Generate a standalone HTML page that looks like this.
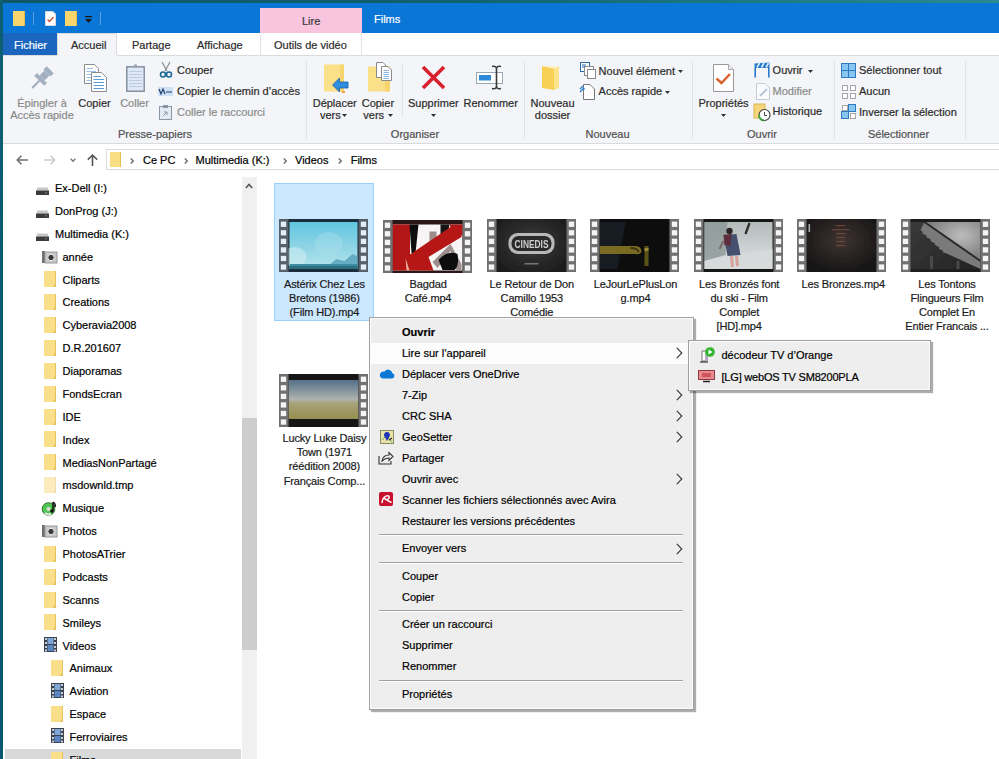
<!DOCTYPE html>
<html><head><meta charset="utf-8">
<style>
*{margin:0;padding:0;box-sizing:border-box}
html,body{width:999px;height:759px;overflow:hidden;background:#fff}
body{position:relative;font-family:"Liberation Sans",sans-serif;font-size:11px;color:#000}
.a{position:absolute}
svg.a{overflow:visible}
.t{position:absolute;white-space:nowrap;line-height:14px;font-size:11px;-webkit-text-stroke:0.2px currentColor}
.c{text-align:center}
.rt{color:#2b2b2b}
.dis{color:#8a8a8a}
.gl{color:#505050}
</style></head><body>

<div class="a" style="left:0px;top:0px;width:999px;height:3px;background:linear-gradient(90deg,#0e5866 0%,#10626c 45%,#1b7a83 75%,#2a8b8e 100%)"></div>
<div class="a" style="left:3px;top:3px;width:996px;height:30px;background:#0a76d6"></div>
<div class="a" style="left:0px;top:0px;width:3px;height:759px;background:linear-gradient(180deg,#0d5f74,#0b5a6e 50%,#0a5570)"></div>
<div class="a" style="left:13px;top:11px;width:12px;height:15px;background:#f9d56e;border-right:1px solid #e7b94a"></div>
<div class="a" style="left:33px;top:12px;width:1px;height:13px;background:#5a9ee0"></div>
<svg class="a" style="left:45px;top:11px" width="11" height="15" viewBox="0 0 11 15"><path d="M0.5 0.5H8L10.5 3V14.5H0.5Z" fill="#fff" stroke="#d8d8d8"/><path d="M2.5 8.5L4.5 10.5L8.5 6" fill="none" stroke="#c4512b" stroke-width="1.3"/></svg>
<div class="a" style="left:65px;top:11px;width:12px;height:15px;background:#f9d56e;border-right:1px solid #e7b94a"></div>
<svg class="a" style="left:85px;top:16px" width="8" height="8" viewBox="0 0 8 8"><rect x="0" y="0" width="7" height="1.3" fill="#1a1a1a"/><path d="M0 3H7L3.5 7Z" fill="#1a1a1a"/></svg>
<div class="a" style="left:100px;top:12px;width:1px;height:13px;background:#5a9ee0"></div>
<div class="a" style="left:260px;top:8px;width:102px;height:25px;background:#f8c4de"></div>
<div class="t " style="left:302px;top:13.5px;color:#3a3a3a">Lire</div>
<div class="t " style="left:374px;top:11.7px;color:#fff">Films</div>
<div class="a" style="left:3px;top:33px;width:996px;height:22px;background:#fff"></div>
<div class="a" style="left:3px;top:33px;width:54px;height:22px;background:#1a66bf"></div>
<div class="t " style="left:14px;top:37.8px;color:#fff">Fichier</div>
<div class="a" style="left:57px;top:33px;width:60px;height:23px;background:#f3f5f8;border:1px solid #dadbdc;border-bottom:none"></div>
<div class="t rt" style="left:71px;top:37.8px;">Accueil</div>
<div class="t rt" style="left:132px;top:37.8px;">Partage</div>
<div class="t rt" style="left:197px;top:37.8px;">Affichage</div>
<div class="a" style="left:260px;top:33px;width:1px;height:22px;background:#e3e3e3"></div>
<div class="a" style="left:361px;top:33px;width:1px;height:22px;background:#e3e3e3"></div>
<div class="t rt" style="left:274px;top:37.5px;">Outils de vidéo</div>
<div class="a" style="left:3px;top:55px;width:996px;height:89px;background:#f3f5f8;border-top:1px solid #dadbdc;border-bottom:1px solid #dadbdc"></div>
<div class="a" style="left:57px;top:55px;width:60px;height:1px;background:#f3f5f8"></div>
<div class="a" style="left:306px;top:61px;width:1px;height:78px;background:#e2e3e4"></div>
<div class="a" style="left:524px;top:61px;width:1px;height:78px;background:#e2e3e4"></div>
<div class="a" style="left:692px;top:61px;width:1px;height:78px;background:#e2e3e4"></div>
<div class="a" style="left:834px;top:61px;width:1px;height:78px;background:#e2e3e4"></div>
<div class="a" style="left:965px;top:61px;width:1px;height:78px;background:#e2e3e4"></div>
<div class="a" style="left:402px;top:64px;width:1px;height:53px;background:#e2e3e4"></div>
<svg class="a" style="left:29.5px;top:67.5px" width="22" height="22" viewBox="0 0 22 22"><g transform="rotate(45 11 11)" fill="#a3b0c2"><rect x="6" y="-2" width="10" height="4.5"/><rect x="7.5" y="2.5" width="7" height="7"/><rect x="4" y="9.5" width="14" height="4"/><rect x="10" y="13.5" width="2.2" height="10"/></g></svg>
<div class="t c dis" style="left:-18.0px;width:120px;top:95.8px;">Épingler à</div>
<div class="t c dis" style="left:-18.0px;width:120px;top:108.0px;">Accès rapide</div>
<svg class="a" style="left:84px;top:64px" width="24" height="28" viewBox="0 0 24 28"><path d="M0.5 0.5H10.5L14.5 4.5V19.5H0.5Z" fill="#fff" stroke="#8c8c8c"/><g stroke="#9cc3e6"><path d="M2.5 4.5H9M2.5 7.5H12M2.5 10.5H12M2.5 13.5H12M2.5 16.5H7"/></g><path d="M7.5 8.5H17.5L22.5 13.5V27.5H7.5Z" fill="#fff" stroke="#8c8c8c"/><g stroke="#5b9bd5"><path d="M9.5 12.5H17M9.5 15.5H20M9.5 18.5H20M9.5 21.5H20M9.5 24.5H20"/></g></svg>
<div class="t c rt" style="left:34.5px;width:120px;top:95.8px;">Copier</div>
<svg class="a" style="left:126px;top:64px" width="19" height="28" viewBox="0 0 19 28"><rect x="0.8" y="2.8" width="17.4" height="24.4" fill="#dfe9f6" stroke="#7d8a99" stroke-width="1.4"/><g stroke="#bccde3"><path d="M3 7.5H16M3 10.5H16M3 13.5H16M3 16.5H16M3 19.5H16M3 22.5H16"/></g><rect x="8" y="0.5" width="3" height="3" fill="#9aa5b2"/></svg>
<div class="t c dis" style="left:74.5px;width:120px;top:95.8px;">Coller</div>
<div class="t c gl" style="left:95.0px;width:120px;top:126.9px;">Presse-papiers</div>
<svg class="a" style="left:160px;top:62px" width="12" height="16" viewBox="0 0 12 16"><path d="M2 0L7 9M10 0L5 9" stroke="#8a8a8a" stroke-width="1.2"/><circle cx="3" cy="12.5" r="2.5" fill="none" stroke="#1f6b94" stroke-width="1.6"/><circle cx="9" cy="12.5" r="2.5" fill="none" stroke="#1f6b94" stroke-width="1.6"/></svg>
<div class="t rt" style="left:177px;top:63.1px;">Couper</div>
<svg class="a" style="left:158px;top:87px" width="15" height="9" viewBox="0 0 15 9"><rect x="0" y="0" width="15" height="9" fill="#cfe2f5"/><path d="M1 2L3 7L5 2L7 7M8 5H14" stroke="#1c3d6e" stroke-width="1.2" fill="none"/></svg>
<div class="t rt" style="left:177px;top:84.2px;">Copier le chemin d’accès</div>
<svg class="a" style="left:159px;top:105px" width="13" height="15" viewBox="0 0 13 15"><rect x="0.5" y="1.5" width="12" height="13" fill="#e4ebf4" stroke="#8b96a5"/><rect x="4" y="0" width="5" height="3" fill="#8b96a5"/><path d="M4 11L8 7M5 7H8V10" stroke="#8b96a5" fill="none"/></svg>
<div class="t dis" style="left:177px;top:105.1px;">Coller le raccourci</div>
<svg class="a" style="left:323px;top:64px" width="26" height="29" viewBox="0 0 26 29"><rect x="1" y="0.5" width="20" height="27" fill="#fbe08a"/><rect x="17" y="0.5" width="4" height="27" fill="#f6d46e"/><path d="M9.5 21L16.5 14V18H25V24H16.5V28Z" fill="#2f8ee0" stroke="#1d5f9e" stroke-width="0.8"/><rect x="19" y="27" width="3" height="2" fill="#f0a040"/></svg>
<div class="t rt" style="left:312.7px;top:95.9px;">Déplacer</div>
<div class="t rt" style="left:320px;top:108.2px;">vers</div>
<svg class="a" style="left:342px;top:113.5px" width="5" height="3" viewBox="0 0 5 3"><path d="M0 0H5L2.5 3Z" fill="#333"/></svg>
<svg class="a" style="left:367px;top:62px" width="27" height="30" viewBox="0 0 27 30"><rect x="1" y="4.5" width="22" height="25" fill="#fbe08a"/><rect x="18" y="4.5" width="5" height="25" fill="#f6d46e"/><path d="M9.5 0.5H16L18.5 3V15.5H9.5Z" fill="#fff" stroke="#8a8a8a"/><path d="M14.5 4.5H21L24.5 8V18.5H14.5Z" fill="#fff" stroke="#8a8a8a"/><path d="M16.5 8.5H22M16.5 10.5H22M16.5 12.5H22M16.5 14.5H22M16.5 16.5H22" stroke="#8ab8e2"/></svg>
<div class="t rt" style="left:361.7px;top:95.9px;">Copier</div>
<div class="t rt" style="left:363.3px;top:108.2px;">vers</div>
<svg class="a" style="left:388px;top:113.5px" width="5" height="3" viewBox="0 0 5 3"><path d="M0 0H5L2.5 3Z" fill="#333"/></svg>
<svg class="a" style="left:421px;top:65px" width="25" height="25" viewBox="0 0 25 25"><path d="M2 2L23 23M23 2L2 23" stroke="#d8202d" stroke-width="3.6"/></svg>
<div class="t rt" style="left:408px;top:95.9px;">Supprimer</div>
<svg class="a" style="left:431px;top:114px" width="5" height="3" viewBox="0 0 5 3"><path d="M0 0H5L2.5 3Z" fill="#333"/></svg>
<svg class="a" style="left:475px;top:64px" width="29" height="28" viewBox="0 0 29 28"><rect x="1.5" y="8.5" width="26" height="11" fill="#fff" stroke="#9aa7b5"/><rect x="4" y="11" width="12" height="5.5" fill="#2d89d9"/><path d="M17 2.5Q21.5 1.5 21.5 5V22Q21.5 25.5 17 24.5M26 2.5Q21.5 1.5 21.5 5V22Q21.5 25.5 26 24.5" stroke="#3a3a3a" stroke-width="1.6" fill="none"/></svg>
<div class="t rt" style="left:463.5px;top:95.9px;">Renommer</div>
<div class="t c gl" style="left:355.0px;width:120px;top:127.2px;">Organiser</div>
<svg class="a" style="left:541px;top:65px" width="19" height="26" viewBox="0 0 19 26"><path d="M1 1L13 3.5V25L1 23Z" fill="#f7d153"/><path d="M13 3.5L18 1.5V23L13 25Z" fill="#fbe38a"/><path d="M1 1L18 1.5L13 3.5Z" fill="#fdf0bf"/></svg>
<div class="t c rt" style="left:492.5px;width:120px;top:96.2px;">Nouveau</div>
<div class="t c rt" style="left:492.5px;width:120px;top:107.8px;">dossier</div>
<svg class="a" style="left:580px;top:62px" width="16" height="17" viewBox="0 0 16 17"><rect x="0.5" y="0.5" width="9" height="9" fill="#fff" stroke="#2d6aa8"/><rect x="4.5" y="4.5" width="9" height="9" fill="#fff" stroke="#8a8a8a"/><rect x="7.5" y="7.5" width="8" height="9" fill="#fff" stroke="#8a8a8a"/><path d="M2 3H6M2 5H5" stroke="#2d6aa8"/></svg>
<div class="t rt" style="left:598.6px;top:63.6px;">Nouvel élément</div>
<svg class="a" style="left:678px;top:70px" width="6" height="4" viewBox="0 0 6 4"><path d="M0 0H5L2.5 3Z" fill="#333"/></svg>
<svg class="a" style="left:580px;top:84px" width="15" height="16" viewBox="0 0 15 16"><path d="M3.5 0.5H10L14.5 5V15.5H3.5Z" fill="#fff" stroke="#777"/><path d="M0 5L3 2M0 8L4 4M2 5H5" stroke="#2d7bd0" stroke-width="1.2"/></svg>
<div class="t rt" style="left:598.6px;top:84.4px;">Accès rapide</div>
<svg class="a" style="left:665px;top:91px" width="6" height="4" viewBox="0 0 6 4"><path d="M0 0H5L2.5 3Z" fill="#333"/></svg>
<div class="t c gl" style="left:547.5px;width:120px;top:126.6px;">Nouveau</div>
<svg class="a" style="left:713px;top:64px" width="21" height="28" viewBox="0 0 21 28"><path d="M0.5 0.5H15.5L20.5 5.5V27.5H0.5Z" fill="#fff" stroke="#999"/><path d="M15.5 0.5V5.5H20.5" fill="#eee" stroke="#aaa"/><path d="M3.5 14.5L8.5 19L17 10" stroke="#d9602f" stroke-width="2.4" fill="none"/></svg>
<div class="t c rt" style="left:663.5px;width:120px;top:96.0px;">Propriétés</div>
<svg class="a" style="left:721px;top:113.5px" width="6" height="4" viewBox="0 0 6 4"><path d="M0 0H5L2.5 3Z" fill="#333"/></svg>
<svg class="a" style="left:754px;top:62px" width="16" height="16" viewBox="0 0 16 16"><path d="M0.5 1.5L15.5 0.5V6H0.5Z" fill="#2a78c8"/><path d="M3 5.5L5.5 1M7.5 5.5L10 1M12 5.5L14.5 1" stroke="#d8ecfb" stroke-width="1.6"/><path d="M1.2 6V15.5M14.8 6V15.5" stroke="#2a78c8" stroke-width="1.6"/></svg>
<div class="t rt" style="left:772.6px;top:62.8px;">Ouvrir</div>
<svg class="a" style="left:808px;top:70px" width="6" height="4" viewBox="0 0 6 4"><path d="M0 0H5L2.5 3Z" fill="#333"/></svg>
<svg class="a" style="left:756px;top:83px" width="14" height="17" viewBox="0 0 14 17"><path d="M0.5 0.5H9L13.5 5V16.5H0.5Z" fill="#fafbfc" stroke="#c4ccd6"/><path d="M4 13L11 6" stroke="#b9c7d8" stroke-width="2"/></svg>
<div class="t dis" style="left:772.6px;top:84.2px;">Modifier</div>
<svg class="a" style="left:753px;top:103px" width="18" height="18" viewBox="0 0 18 18"><rect x="1" y="1" width="11" height="14" fill="#f5d67a" stroke="#d9b34e"/><circle cx="11.5" cy="12" r="5.5" fill="#fff" stroke="#444" stroke-width="1.2"/><path d="M11.5 9V12.5H14" stroke="#444" fill="none"/><path d="M6 12A5.5 5.5 0 0 0 11 17.5" stroke="#3aa43a" stroke-width="2" fill="none"/></svg>
<div class="t rt" style="left:772.6px;top:104.4px;">Historique</div>
<div class="t c gl" style="left:702.0px;width:120px;top:126.8px;">Ouvrir</div>
<svg class="a" style="left:841px;top:63px" width="15" height="15" viewBox="0 0 15 15"><g fill="#86c6f0" stroke="#2f78c2"><rect x="0.5" y="0.5" width="7" height="7"/><rect x="7.5" y="0.5" width="7" height="7"/><rect x="0.5" y="7.5" width="7" height="7"/><rect x="7.5" y="7.5" width="7" height="7"/></g></svg>
<div class="t rt" style="left:859px;top:63.1px;">Sélectionner tout</div>
<svg class="a" style="left:841px;top:84px" width="16" height="16" viewBox="0 0 16 16"><g fill="#fff" stroke="#a5a5a5"><rect x="1.5" y="1.5" width="5" height="5"/><rect x="9.5" y="1.5" width="5" height="5"/><rect x="1.5" y="9.5" width="5" height="5"/><rect x="9.5" y="9.5" width="5" height="5"/></g></svg>
<div class="t rt" style="left:859px;top:84.2px;">Aucun</div>
<svg class="a" style="left:841px;top:104px" width="16" height="16" viewBox="0 0 16 16"><g stroke-width="1"><rect x="1.5" y="1.5" width="5" height="5" fill="#fff" stroke="#a5a5a5"/><rect x="7.5" y="0.5" width="7" height="7" fill="#86c6f0" stroke="#2f78c2"/><rect x="0.5" y="7.5" width="7" height="7" fill="#86c6f0" stroke="#2f78c2"/><rect x="9.5" y="9.5" width="5" height="5" fill="#fff" stroke="#a5a5a5"/></g></svg>
<div class="t rt" style="left:859px;top:105.1px;">Inverser la sélection</div>
<div class="t c gl" style="left:838.5px;width:120px;top:126.8px;">Sélectionner</div>
<svg class="a" style="left:16px;top:155px" width="12" height="10" viewBox="0 0 12 10"><path d="M1 5H12M5.5 0.8L1.2 5L5.5 9.2" stroke="#707070" stroke-width="1.5" fill="none"/></svg>
<svg class="a" style="left:44px;top:155px" width="12" height="10" viewBox="0 0 12 10"><path d="M0 5H11M6.5 0.8L10.8 5L6.5 9.2" stroke="#cdcdcd" stroke-width="1.5" fill="none"/></svg>
<svg class="a" style="left:70px;top:157.5px" width="6" height="4" viewBox="0 0 6 4"><path d="M0.6 0.6L3 3.2L5.4 0.6" stroke="#707070" stroke-width="1.3" fill="none"/></svg>
<svg class="a" style="left:87px;top:154px" width="11" height="12" viewBox="0 0 11 12"><path d="M5.5 1.2V12M0.8 5.6L5.5 1L10.2 5.6" stroke="#555" stroke-width="1.6" fill="none"/></svg>
<div class="a" style="left:106px;top:149px;width:893px;height:21px;border:1px solid #dcdcdc;border-right:none;background:#fff"></div>
<div class="a" style="left:110px;top:152px;width:11px;height:15px;background:#f9dd82;border-right:1px solid #e3bf55"></div>
<svg class="a" style="left:130px;top:157.5px" width="5" height="6" viewBox="0 0 5 6"><path d="M0.8 0.5L3.3 3L0.8 5.5" stroke="#6d6d6d" stroke-width="1.4" fill="none"/></svg>
<svg class="a" style="left:183.5px;top:157.5px" width="5" height="6" viewBox="0 0 5 6"><path d="M0.8 0.5L3.3 3L0.8 5.5" stroke="#6d6d6d" stroke-width="1.4" fill="none"/></svg>
<svg class="a" style="left:282.5px;top:157.5px" width="5" height="6" viewBox="0 0 5 6"><path d="M0.8 0.5L3.3 3L0.8 5.5" stroke="#6d6d6d" stroke-width="1.4" fill="none"/></svg>
<svg class="a" style="left:337.5px;top:157.5px" width="5" height="6" viewBox="0 0 5 6"><path d="M0.8 0.5L3.3 3L0.8 5.5" stroke="#6d6d6d" stroke-width="1.4" fill="none"/></svg>
<div class="t " style="left:143px;top:152.5px;">Ce PC</div>
<div class="t " style="left:195.5px;top:152.5px;">Multimedia (K:)</div>
<div class="t " style="left:295px;top:152.5px;">Videos</div>
<div class="t " style="left:350.7px;top:152.5px;">Films</div>
<div class="a" style="left:242px;top:177px;width:15px;height:582px;background:#f0f0f0"></div>
<svg class="a" style="left:245px;top:183px" width="8" height="6" viewBox="0 0 8 6"><path d="M0.8 5L4 1.5L7.2 5" stroke="#555" stroke-width="1.6" fill="none"/></svg>
<div class="a" style="left:242px;top:418px;width:15px;height:232px;background:#cdcdcd"></div>
<div class="a" style="left:5px;top:749px;width:236px;height:10px;background:#d9d9d9"></div>
<svg class="a" style="left:35.5px;top:187.4px" width="13" height="8" viewBox="0 0 13 8"><path d="M1.5 0.5H11.5L12.5 3.5H0.5Z" fill="#c6c6c6"/><rect x="0" y="3.5" width="13" height="4.5" fill="#3b3b3b"/><rect x="9" y="5" width="2" height="1.5" fill="#6a6a6a"/></svg>
<div class="t " style="left:55px;top:181.1px;">Ex-Dell (I:)</div>
<svg class="a" style="left:35.5px;top:210.27px" width="13" height="8" viewBox="0 0 13 8"><path d="M1.5 0.5H11.5L12.5 3.5H0.5Z" fill="#c6c6c6"/><rect x="0" y="3.5" width="13" height="4.5" fill="#3b3b3b"/><rect x="9" y="5" width="2" height="1.5" fill="#6a6a6a"/></svg>
<div class="t " style="left:55px;top:204.0px;">DonProg (J:)</div>
<svg class="a" style="left:35.5px;top:233.14000000000001px" width="13" height="8" viewBox="0 0 13 8"><path d="M1.5 0.5H11.5L12.5 3.5H0.5Z" fill="#c6c6c6"/><rect x="0" y="3.5" width="13" height="4.5" fill="#3b3b3b"/><rect x="9" y="5" width="2" height="1.5" fill="#6a6a6a"/></svg>
<div class="t " style="left:55px;top:226.8px;">Multimedia (K:)</div>
<svg class="a" style="left:42px;top:251.01px" width="15" height="12" viewBox="0 0 15 12"><rect x="0" y="0" width="3" height="12" fill="#707070"/><rect x="3" y="1" width="12" height="11" fill="#c8c8c8" stroke="#9a9a9a"/><circle cx="9" cy="6.5" r="3.2" fill="#3a3a3a" stroke="#eee"/></svg>
<div class="t " style="left:62.5px;top:249.7px;">année</div>
<div class="a" style="left:44px;top:271.38px;width:12px;height:16px;background:#fadf8a;border-right:1px solid #e6c25c"></div>
<svg class="a" style="left:53px;top:282.38px" width="3" height="5" viewBox="0 0 3 5"><path d="M3 0V5H0Z" fill="#e6c25c"/></svg>
<div class="t " style="left:62.5px;top:272.6px;">Cliparts</div>
<div class="a" style="left:44px;top:294.25px;width:12px;height:16px;background:#fadf8a;border-right:1px solid #e6c25c"></div>
<svg class="a" style="left:53px;top:305.25px" width="3" height="5" viewBox="0 0 3 5"><path d="M3 0V5H0Z" fill="#e6c25c"/></svg>
<div class="t " style="left:62.5px;top:295.4px;">Creations</div>
<div class="a" style="left:44px;top:317.12px;width:12px;height:16px;background:#fadf8a;border-right:1px solid #e6c25c"></div>
<svg class="a" style="left:53px;top:328.12px" width="3" height="5" viewBox="0 0 3 5"><path d="M3 0V5H0Z" fill="#e6c25c"/></svg>
<div class="t " style="left:62.5px;top:318.3px;">Cyberavia2008</div>
<div class="a" style="left:44px;top:339.99px;width:12px;height:16px;background:#fadf8a;border-right:1px solid #e6c25c"></div>
<svg class="a" style="left:53px;top:350.99px" width="3" height="5" viewBox="0 0 3 5"><path d="M3 0V5H0Z" fill="#e6c25c"/></svg>
<div class="t " style="left:62.5px;top:341.2px;">D.R.201607</div>
<div class="a" style="left:44px;top:362.86px;width:12px;height:16px;background:#fadf8a;border-right:1px solid #e6c25c"></div>
<svg class="a" style="left:53px;top:373.86px" width="3" height="5" viewBox="0 0 3 5"><path d="M3 0V5H0Z" fill="#e6c25c"/></svg>
<div class="t " style="left:62.5px;top:364.1px;">Diaporamas</div>
<div class="a" style="left:44px;top:385.73px;width:12px;height:16px;background:#fadf8a;border-right:1px solid #e6c25c"></div>
<svg class="a" style="left:53px;top:396.73px" width="3" height="5" viewBox="0 0 3 5"><path d="M3 0V5H0Z" fill="#e6c25c"/></svg>
<div class="t " style="left:62.5px;top:386.9px;">FondsEcran</div>
<div class="a" style="left:44px;top:408.6px;width:12px;height:16px;background:#fadf8a;border-right:1px solid #e6c25c"></div>
<svg class="a" style="left:53px;top:419.6px" width="3" height="5" viewBox="0 0 3 5"><path d="M3 0V5H0Z" fill="#e6c25c"/></svg>
<div class="t " style="left:62.5px;top:409.8px;">IDE</div>
<div class="a" style="left:44px;top:431.47px;width:12px;height:16px;background:#fadf8a;border-right:1px solid #e6c25c"></div>
<svg class="a" style="left:53px;top:442.47px" width="3" height="5" viewBox="0 0 3 5"><path d="M3 0V5H0Z" fill="#e6c25c"/></svg>
<div class="t " style="left:62.5px;top:432.7px;">Index</div>
<div class="a" style="left:44px;top:454.34000000000003px;width:12px;height:16px;background:#fadf8a;border-right:1px solid #e6c25c"></div>
<svg class="a" style="left:53px;top:465.34000000000003px" width="3" height="5" viewBox="0 0 3 5"><path d="M3 0V5H0Z" fill="#e6c25c"/></svg>
<div class="t " style="left:62.5px;top:455.5px;">MediasNonPartagé</div>
<div class="a" style="left:44px;top:477.21000000000004px;width:12px;height:16px;background:#fcebbd;border-right:1px solid #efdca6"></div>
<svg class="a" style="left:53px;top:488.21000000000004px" width="3" height="5" viewBox="0 0 3 5"><path d="M3 0V5H0Z" fill="#efdca6"/></svg>
<div class="t " style="left:62.5px;top:478.4px;">msdownld.tmp</div>
<svg class="a" style="left:42px;top:501.08000000000004px" width="15" height="15" viewBox="0 0 15 15"><circle cx="6.5" cy="8" r="6.3" fill="#52c652" stroke="#2f6f2f"/><circle cx="6.5" cy="8" r="2" fill="#ddd"/><path d="M3 12A6 6 0 0 0 9 13" stroke="#eee" stroke-width="2" fill="none"/><path d="M11 1V9" stroke="#111" stroke-width="1.5"/><path d="M11 1Q14 3 13 6" stroke="#111" stroke-width="1.5" fill="none"/><circle cx="10" cy="10" r="1.8" fill="#111"/></svg>
<div class="t " style="left:62.5px;top:501.3px;">Musique</div>
<svg class="a" style="left:42px;top:525.45px" width="15" height="12" viewBox="0 0 15 12"><rect x="0" y="0" width="3" height="12" fill="#707070"/><rect x="3" y="1" width="12" height="11" fill="#c8c8c8" stroke="#9a9a9a"/><circle cx="9" cy="6.5" r="3.2" fill="#3a3a3a" stroke="#eee"/></svg>
<div class="t " style="left:62.5px;top:524.2px;">Photos</div>
<div class="a" style="left:44px;top:545.82px;width:12px;height:16px;background:#fadf8a;border-right:1px solid #e6c25c"></div>
<svg class="a" style="left:53px;top:556.82px" width="3" height="5" viewBox="0 0 3 5"><path d="M3 0V5H0Z" fill="#e6c25c"/></svg>
<div class="t " style="left:62.5px;top:547.0px;">PhotosATrier</div>
<div class="a" style="left:44px;top:568.69px;width:12px;height:16px;background:#fadf8a;border-right:1px solid #e6c25c"></div>
<svg class="a" style="left:53px;top:579.69px" width="3" height="5" viewBox="0 0 3 5"><path d="M3 0V5H0Z" fill="#e6c25c"/></svg>
<div class="t " style="left:62.5px;top:569.9px;">Podcasts</div>
<div class="a" style="left:44px;top:591.5600000000001px;width:12px;height:16px;background:#fadf8a;border-right:1px solid #e6c25c"></div>
<svg class="a" style="left:53px;top:602.5600000000001px" width="3" height="5" viewBox="0 0 3 5"><path d="M3 0V5H0Z" fill="#e6c25c"/></svg>
<div class="t " style="left:62.5px;top:592.8px;">Scanns</div>
<div class="a" style="left:44px;top:614.4300000000001px;width:12px;height:16px;background:#fadf8a;border-right:1px solid #e6c25c"></div>
<svg class="a" style="left:53px;top:625.4300000000001px" width="3" height="5" viewBox="0 0 3 5"><path d="M3 0V5H0Z" fill="#e6c25c"/></svg>
<div class="t " style="left:62.5px;top:615.6px;">Smileys</div>
<svg class="a" style="left:44px;top:636.8000000000001px" width="13" height="15" viewBox="0 0 13 15"><rect x="0" y="0" width="13" height="15" fill="#3b4250"/><g fill="#c8ccd4"><rect x="1" y="1" width="2" height="2"/><rect x="1" y="5" width="2" height="2"/><rect x="1" y="9" width="2" height="2"/><rect x="1" y="12.5" width="2" height="2"/><rect x="10" y="1" width="2" height="2"/><rect x="10" y="5" width="2" height="2"/><rect x="10" y="9" width="2" height="2"/><rect x="10" y="12.5" width="2" height="2"/></g><rect x="3.5" y="1" width="6" height="6" fill="#7ea6d8"/><rect x="3.5" y="8" width="6" height="6" fill="#5b86c2"/></svg>
<div class="t " style="left:62.5px;top:638.5px;">Videos</div>
<div class="a" style="left:51px;top:660.1700000000001px;width:12px;height:16px;background:#fadf8a;border-right:1px solid #e6c25c"></div>
<svg class="a" style="left:60px;top:671.1700000000001px" width="3" height="5" viewBox="0 0 3 5"><path d="M3 0V5H0Z" fill="#e6c25c"/></svg>
<div class="t " style="left:69.5px;top:661.4px;">Animaux</div>
<svg class="a" style="left:51px;top:682.5400000000001px" width="13" height="15" viewBox="0 0 13 15"><rect x="0" y="0" width="13" height="15" fill="#3b4250"/><g fill="#c8ccd4"><rect x="1" y="1" width="2" height="2"/><rect x="1" y="5" width="2" height="2"/><rect x="1" y="9" width="2" height="2"/><rect x="1" y="12.5" width="2" height="2"/><rect x="10" y="1" width="2" height="2"/><rect x="10" y="5" width="2" height="2"/><rect x="10" y="9" width="2" height="2"/><rect x="10" y="12.5" width="2" height="2"/></g><rect x="3.5" y="1" width="6" height="6" fill="#7ea6d8"/><rect x="3.5" y="8" width="6" height="6" fill="#5b86c2"/></svg>
<div class="t " style="left:69.5px;top:684.2px;">Aviation</div>
<div class="a" style="left:51px;top:705.91px;width:12px;height:16px;background:#fadf8a;border-right:1px solid #e6c25c"></div>
<svg class="a" style="left:60px;top:716.91px" width="3" height="5" viewBox="0 0 3 5"><path d="M3 0V5H0Z" fill="#e6c25c"/></svg>
<div class="t " style="left:69.5px;top:707.1px;">Espace</div>
<svg class="a" style="left:51px;top:728.28px" width="13" height="15" viewBox="0 0 13 15"><rect x="0" y="0" width="13" height="15" fill="#3b4250"/><g fill="#c8ccd4"><rect x="1" y="1" width="2" height="2"/><rect x="1" y="5" width="2" height="2"/><rect x="1" y="9" width="2" height="2"/><rect x="1" y="12.5" width="2" height="2"/><rect x="10" y="1" width="2" height="2"/><rect x="10" y="5" width="2" height="2"/><rect x="10" y="9" width="2" height="2"/><rect x="10" y="12.5" width="2" height="2"/></g><rect x="3.5" y="1" width="6" height="6" fill="#7ea6d8"/><rect x="3.5" y="8" width="6" height="6" fill="#5b86c2"/></svg>
<div class="t " style="left:69.5px;top:730.0px;">Ferroviaires</div>
<div class="a" style="left:51px;top:751.65px;width:12px;height:16px;background:#fadf8a;border-right:1px solid #e6c25c"></div>
<svg class="a" style="left:60px;top:762.65px" width="3" height="5" viewBox="0 0 3 5"><path d="M3 0V5H0Z" fill="#e6c25c"/></svg>
<div class="t " style="left:69.5px;top:752.9px;">Films</div>
<div class="a" style="left:274px;top:183px;width:100px;height:138px;background:#cce8ff;border:1px solid #99d1ff"></div>
<svg class="a" style="left:279px;top:219px" width="89" height="53" viewBox="0 0 89 53"><rect x="0" y="0" width="89" height="53" fill="#56606a"/><rect x="1.8" y="2.60" width="5.4" height="5.3" fill="#e4eef6"/><rect x="81.8" y="2.60" width="5.4" height="5.3" fill="#e4eef6"/><rect x="1.8" y="11.16" width="5.4" height="5.3" fill="#e4eef6"/><rect x="81.8" y="11.16" width="5.4" height="5.3" fill="#e4eef6"/><rect x="1.8" y="19.72" width="5.4" height="5.3" fill="#e4eef6"/><rect x="81.8" y="19.72" width="5.4" height="5.3" fill="#e4eef6"/><rect x="1.8" y="28.28" width="5.4" height="5.3" fill="#e4eef6"/><rect x="81.8" y="28.28" width="5.4" height="5.3" fill="#e4eef6"/><rect x="1.8" y="36.84" width="5.4" height="5.3" fill="#e4eef6"/><rect x="81.8" y="36.84" width="5.4" height="5.3" fill="#e4eef6"/><rect x="1.8" y="45.40" width="5.4" height="5.3" fill="#e4eef6"/><rect x="81.8" y="45.40" width="5.4" height="5.3" fill="#e4eef6"/><svg x="9.5" y="0" width="70" height="53" viewBox="0 0 70 53"><defs><filter id="bl" x="-10%" y="-10%" width="120%" height="120%"><feGaussianBlur stdDeviation="0.7"/></filter></defs><rect width="70" height="53" fill="#111"/><g filter="url(#bl)"><defs><linearGradient id="g1" x1="0" y1="0" x2="0" y2="1"><stop offset="0" stop-color="#62c6e0"/><stop offset="0.6" stop-color="#94d6e6"/><stop offset="1" stop-color="#b9e6ee"/></linearGradient></defs><rect width="70" height="53" fill="#1b2e3c"/><rect x="1" y="3" width="68" height="47" fill="url(#g1)"/><ellipse cx="6" cy="38" rx="12" ry="10" fill="#d2eef2" opacity="0.55"/><ellipse cx="40" cy="25" rx="14" ry="12" fill="#b8e6ef" opacity="0.3"/><path d="M38 48L48 40L56 42L64 35L69 37V50H38Z" fill="#58a4bd" opacity="0.85"/><rect x="1" y="45" width="68" height="5" fill="#3c8ea3"/><rect x="1" y="47" width="68" height="3" fill="#2a6f82"/></g></svg></svg>
<svg class="a" style="left:383px;top:220px" width="89" height="53" viewBox="0 0 89 53"><rect x="0" y="0" width="89" height="53" fill="#707070"/><rect x="1.8" y="2.60" width="5.4" height="5.3" fill="#f4f4f4"/><rect x="81.8" y="2.60" width="5.4" height="5.3" fill="#f4f4f4"/><rect x="1.8" y="11.16" width="5.4" height="5.3" fill="#f4f4f4"/><rect x="81.8" y="11.16" width="5.4" height="5.3" fill="#f4f4f4"/><rect x="1.8" y="19.72" width="5.4" height="5.3" fill="#f4f4f4"/><rect x="81.8" y="19.72" width="5.4" height="5.3" fill="#f4f4f4"/><rect x="1.8" y="28.28" width="5.4" height="5.3" fill="#f4f4f4"/><rect x="81.8" y="28.28" width="5.4" height="5.3" fill="#f4f4f4"/><rect x="1.8" y="36.84" width="5.4" height="5.3" fill="#f4f4f4"/><rect x="81.8" y="36.84" width="5.4" height="5.3" fill="#f4f4f4"/><rect x="1.8" y="45.40" width="5.4" height="5.3" fill="#f4f4f4"/><rect x="81.8" y="45.40" width="5.4" height="5.3" fill="#f4f4f4"/><svg x="9.5" y="0" width="70" height="53" viewBox="0 0 70 53"><defs><filter id="bl" x="-10%" y="-10%" width="120%" height="120%"><feGaussianBlur stdDeviation="0.7"/></filter></defs><rect width="70" height="53" fill="#111"/><g filter="url(#bl)"><rect width="70" height="53" fill="#2a1414"/><rect x="0" y="4.5" width="70" height="46" fill="#f6f4f4"/><rect x="0" y="4.5" width="17.5" height="46" fill="#b31515"/><path d="M17 4.5H26L23 33H19Z" fill="#111"/><rect x="37" y="11.5" width="7" height="12" fill="#9c8c8c"/><path d="M48 4.5H57L55 15L48 14Z" fill="#151515"/><path d="M57 4.5H70V15L62 17Z" fill="#b01616"/><path d="M40 42L58 24L69 44V50H64L58 31L45 48Z" fill="#9e8e8e"/><path d="M46 40Q55 30 65 34Q67 46 62 50H50Z" fill="#0e0e0e"/><path d="M13 37.5L58 7L69 5V17L36 37L41 50.5H13Z" fill="#b51818"/><path d="M13 38L17 50.5H14Z" fill="#e8b0a0"/></g></svg></svg>
<svg class="a" style="left:487px;top:219px" width="89" height="53" viewBox="0 0 89 53"><rect x="0" y="0" width="89" height="53" fill="#707070"/><rect x="1.8" y="2.60" width="5.4" height="5.3" fill="#f4f4f4"/><rect x="81.8" y="2.60" width="5.4" height="5.3" fill="#f4f4f4"/><rect x="1.8" y="11.16" width="5.4" height="5.3" fill="#f4f4f4"/><rect x="81.8" y="11.16" width="5.4" height="5.3" fill="#f4f4f4"/><rect x="1.8" y="19.72" width="5.4" height="5.3" fill="#f4f4f4"/><rect x="81.8" y="19.72" width="5.4" height="5.3" fill="#f4f4f4"/><rect x="1.8" y="28.28" width="5.4" height="5.3" fill="#f4f4f4"/><rect x="81.8" y="28.28" width="5.4" height="5.3" fill="#f4f4f4"/><rect x="1.8" y="36.84" width="5.4" height="5.3" fill="#f4f4f4"/><rect x="81.8" y="36.84" width="5.4" height="5.3" fill="#f4f4f4"/><rect x="1.8" y="45.40" width="5.4" height="5.3" fill="#f4f4f4"/><rect x="81.8" y="45.40" width="5.4" height="5.3" fill="#f4f4f4"/><svg x="9.5" y="0" width="70" height="53" viewBox="0 0 70 53"><defs><filter id="bl" x="-10%" y="-10%" width="120%" height="120%"><feGaussianBlur stdDeviation="0.7"/></filter></defs><rect width="70" height="53" fill="#111"/><g filter="url(#bl)"><defs><radialGradient id="g3" cx="0.5" cy="0.45" r="0.6"><stop offset="0" stop-color="#3c3c3c"/><stop offset="1" stop-color="#1e1e1e"/></radialGradient></defs><rect width="70" height="53" fill="url(#g3)"/><rect x="12" y="14" width="46" height="21" rx="9" fill="#b8b8b8"/><rect x="15" y="17" width="40" height="15" rx="7" fill="#2a2a2a"/><text x="35" y="28.6" text-anchor="middle" font-family="Liberation Sans" font-size="10" font-weight="bold" fill="#d0d0d0" textLength="34" lengthAdjust="spacingAndGlyphs">CINEDIS</text><rect x="28" y="44" width="14" height="1.5" fill="#777"/></g></svg></svg>
<svg class="a" style="left:590px;top:219px" width="89" height="53" viewBox="0 0 89 53"><rect x="0" y="0" width="89" height="53" fill="#707070"/><rect x="1.8" y="2.60" width="5.4" height="5.3" fill="#f4f4f4"/><rect x="81.8" y="2.60" width="5.4" height="5.3" fill="#f4f4f4"/><rect x="1.8" y="11.16" width="5.4" height="5.3" fill="#f4f4f4"/><rect x="81.8" y="11.16" width="5.4" height="5.3" fill="#f4f4f4"/><rect x="1.8" y="19.72" width="5.4" height="5.3" fill="#f4f4f4"/><rect x="81.8" y="19.72" width="5.4" height="5.3" fill="#f4f4f4"/><rect x="1.8" y="28.28" width="5.4" height="5.3" fill="#f4f4f4"/><rect x="81.8" y="28.28" width="5.4" height="5.3" fill="#f4f4f4"/><rect x="1.8" y="36.84" width="5.4" height="5.3" fill="#f4f4f4"/><rect x="81.8" y="36.84" width="5.4" height="5.3" fill="#f4f4f4"/><rect x="1.8" y="45.40" width="5.4" height="5.3" fill="#f4f4f4"/><rect x="81.8" y="45.40" width="5.4" height="5.3" fill="#f4f4f4"/><svg x="9.5" y="0" width="70" height="53" viewBox="0 0 70 53"><defs><filter id="bl" x="-10%" y="-10%" width="120%" height="120%"><feGaussianBlur stdDeviation="0.7"/></filter></defs><rect width="70" height="53" fill="#111"/><g filter="url(#bl)"><rect width="70" height="53" fill="#0e0e0e"/><path d="M0 3H26L18 50H0Z" fill="#151a24"/><path d="M0 27H36Q42 27 42 33Q40 36 36 35H0Z" fill="#7a6a22"/><path d="M31 29Q38 29 39 33" stroke="#3b3515" stroke-width="2" fill="none"/><rect x="45" y="27" width="4" height="20" fill="#5a5218"/><rect x="45" y="29" width="4" height="3" fill="#9a8a38"/></g></svg></svg>
<svg class="a" style="left:694px;top:219px" width="89" height="53" viewBox="0 0 89 53"><rect x="0" y="0" width="89" height="53" fill="#707070"/><rect x="1.8" y="2.60" width="5.4" height="5.3" fill="#f4f4f4"/><rect x="81.8" y="2.60" width="5.4" height="5.3" fill="#f4f4f4"/><rect x="1.8" y="11.16" width="5.4" height="5.3" fill="#f4f4f4"/><rect x="81.8" y="11.16" width="5.4" height="5.3" fill="#f4f4f4"/><rect x="1.8" y="19.72" width="5.4" height="5.3" fill="#f4f4f4"/><rect x="81.8" y="19.72" width="5.4" height="5.3" fill="#f4f4f4"/><rect x="1.8" y="28.28" width="5.4" height="5.3" fill="#f4f4f4"/><rect x="81.8" y="28.28" width="5.4" height="5.3" fill="#f4f4f4"/><rect x="1.8" y="36.84" width="5.4" height="5.3" fill="#f4f4f4"/><rect x="81.8" y="36.84" width="5.4" height="5.3" fill="#f4f4f4"/><rect x="1.8" y="45.40" width="5.4" height="5.3" fill="#f4f4f4"/><rect x="81.8" y="45.40" width="5.4" height="5.3" fill="#f4f4f4"/><svg x="9.5" y="0" width="70" height="53" viewBox="0 0 70 53"><defs><filter id="bl" x="-10%" y="-10%" width="120%" height="120%"><feGaussianBlur stdDeviation="0.7"/></filter></defs><rect width="70" height="53" fill="#111"/><g filter="url(#bl)"><defs><linearGradient id="g5" x1="0" y1="0" x2="0" y2="1"><stop offset="0" stop-color="#b4bbbb"/><stop offset="1" stop-color="#dfe2e2"/></linearGradient></defs><rect width="70" height="53" fill="#151515"/><rect x="1" y="3" width="68" height="47" fill="url(#g5)"/><path d="M1 3H24L22 36L1 42Z" fill="#8b9795" opacity="0.8"/><path d="M1 42L30 36L69 30V50H1Z" fill="#d6dada"/><path d="M46 4L42 15" stroke="#2a2a2a" stroke-width="2.2"/><circle cx="26" cy="12" r="3.2" fill="#2e2626"/><path d="M20 16L33 15L37 36L24 37Z" fill="#44506e"/><path d="M20 16L28 15L27 27L21 26Z" fill="#5e2e3c"/><path d="M20 22L16 30" stroke="#7a6a70" stroke-width="2"/><path d="M28 37L29 48M33 37L34 47" stroke="#d8a09a" stroke-width="3"/></g></svg></svg>
<svg class="a" style="left:797px;top:219px" width="89" height="53" viewBox="0 0 89 53"><rect x="0" y="0" width="89" height="53" fill="#707070"/><rect x="1.8" y="2.60" width="5.4" height="5.3" fill="#f4f4f4"/><rect x="81.8" y="2.60" width="5.4" height="5.3" fill="#f4f4f4"/><rect x="1.8" y="11.16" width="5.4" height="5.3" fill="#f4f4f4"/><rect x="81.8" y="11.16" width="5.4" height="5.3" fill="#f4f4f4"/><rect x="1.8" y="19.72" width="5.4" height="5.3" fill="#f4f4f4"/><rect x="81.8" y="19.72" width="5.4" height="5.3" fill="#f4f4f4"/><rect x="1.8" y="28.28" width="5.4" height="5.3" fill="#f4f4f4"/><rect x="81.8" y="28.28" width="5.4" height="5.3" fill="#f4f4f4"/><rect x="1.8" y="36.84" width="5.4" height="5.3" fill="#f4f4f4"/><rect x="81.8" y="36.84" width="5.4" height="5.3" fill="#f4f4f4"/><rect x="1.8" y="45.40" width="5.4" height="5.3" fill="#f4f4f4"/><rect x="81.8" y="45.40" width="5.4" height="5.3" fill="#f4f4f4"/><svg x="9.5" y="0" width="70" height="53" viewBox="0 0 70 53"><defs><filter id="bl" x="-10%" y="-10%" width="120%" height="120%"><feGaussianBlur stdDeviation="0.7"/></filter></defs><rect width="70" height="53" fill="#111"/><g filter="url(#bl)"><defs><radialGradient id="g6" cx="0.5" cy="0.4" r="0.7"><stop offset="0" stop-color="#3e3432"/><stop offset="1" stop-color="#121212"/></radialGradient></defs><rect width="70" height="53" fill="url(#g6)"/><g fill="#7a4a36" opacity="0.8"><rect x="29" y="6" width="10" height="1.2"/><rect x="25" y="10" width="18" height="1.2"/><rect x="29" y="14" width="10" height="1.2"/><rect x="30" y="18" width="8" height="1.2"/><rect x="30" y="22" width="8" height="1.2"/><rect x="29" y="26" width="10" height="1.2"/></g><rect x="2" y="5" width="1.6" height="8" fill="#aaa"/></g></svg></svg>
<svg class="a" style="left:901px;top:219px" width="89" height="53" viewBox="0 0 89 53"><rect x="0" y="0" width="89" height="53" fill="#707070"/><rect x="1.8" y="2.60" width="5.4" height="5.3" fill="#f4f4f4"/><rect x="81.8" y="2.60" width="5.4" height="5.3" fill="#f4f4f4"/><rect x="1.8" y="11.16" width="5.4" height="5.3" fill="#f4f4f4"/><rect x="81.8" y="11.16" width="5.4" height="5.3" fill="#f4f4f4"/><rect x="1.8" y="19.72" width="5.4" height="5.3" fill="#f4f4f4"/><rect x="81.8" y="19.72" width="5.4" height="5.3" fill="#f4f4f4"/><rect x="1.8" y="28.28" width="5.4" height="5.3" fill="#f4f4f4"/><rect x="81.8" y="28.28" width="5.4" height="5.3" fill="#f4f4f4"/><rect x="1.8" y="36.84" width="5.4" height="5.3" fill="#f4f4f4"/><rect x="81.8" y="36.84" width="5.4" height="5.3" fill="#f4f4f4"/><rect x="1.8" y="45.40" width="5.4" height="5.3" fill="#f4f4f4"/><rect x="81.8" y="45.40" width="5.4" height="5.3" fill="#f4f4f4"/><svg x="9.5" y="0" width="70" height="53" viewBox="0 0 70 53"><defs><filter id="bl" x="-10%" y="-10%" width="120%" height="120%"><feGaussianBlur stdDeviation="0.7"/></filter></defs><rect width="70" height="53" fill="#111"/><g filter="url(#bl)"><defs><radialGradient id="g7" cx="0.65" cy="0.35" r="0.6"><stop offset="0" stop-color="#bdbdbd"/><stop offset="1" stop-color="#808080"/></radialGradient><linearGradient id="g7b" x1="0" y1="0" x2="1" y2="1"><stop offset="0" stop-color="#3a3a3a"/><stop offset="1" stop-color="#232323"/></linearGradient></defs><rect width="70" height="53" fill="url(#g7b)"/><path d="M14 3H70V42Z" fill="url(#g7)"/><path d="M14 3L70 42V50L35 34L32.5 33.5L32.9 32.1L28.3 29.7L28.8 28.2L24.2 25.8L24.6 24.4L20.0 22.0L20.4 20.6L15.8 18.2L16.2 16.8L11.7 14.3L12.1 12.9L10 11Z" fill="#7a7a7a"/><path d="M14 3L70 42" stroke="#2a2a2a" stroke-width="2"/><rect x="19.5" y="37" width="3" height="13" fill="#4a4a4a"/><rect x="46" y="42" width="3" height="8" fill="#4a4a4a"/><rect width="70" height="3" fill="#1a1a1a"/><rect y="50.5" width="70" height="2.5" fill="#1a1a1a"/></g></svg></svg>
<svg class="a" style="left:279px;top:373.5px" width="89" height="53" viewBox="0 0 89 53"><rect x="0" y="0" width="89" height="53" fill="#707070"/><rect x="1.8" y="2.60" width="5.4" height="5.3" fill="#f4f4f4"/><rect x="81.8" y="2.60" width="5.4" height="5.3" fill="#f4f4f4"/><rect x="1.8" y="11.16" width="5.4" height="5.3" fill="#f4f4f4"/><rect x="81.8" y="11.16" width="5.4" height="5.3" fill="#f4f4f4"/><rect x="1.8" y="19.72" width="5.4" height="5.3" fill="#f4f4f4"/><rect x="81.8" y="19.72" width="5.4" height="5.3" fill="#f4f4f4"/><rect x="1.8" y="28.28" width="5.4" height="5.3" fill="#f4f4f4"/><rect x="81.8" y="28.28" width="5.4" height="5.3" fill="#f4f4f4"/><rect x="1.8" y="36.84" width="5.4" height="5.3" fill="#f4f4f4"/><rect x="81.8" y="36.84" width="5.4" height="5.3" fill="#f4f4f4"/><rect x="1.8" y="45.40" width="5.4" height="5.3" fill="#f4f4f4"/><rect x="81.8" y="45.40" width="5.4" height="5.3" fill="#f4f4f4"/><svg x="9.5" y="0" width="70" height="53" viewBox="0 0 70 53"><defs><filter id="bl" x="-10%" y="-10%" width="120%" height="120%"><feGaussianBlur stdDeviation="0.7"/></filter></defs><rect width="70" height="53" fill="#111"/><g filter="url(#bl)"><defs><linearGradient id="g8" x1="0" y1="0" x2="0" y2="1"><stop offset="0" stop-color="#557089"/><stop offset="0.5" stop-color="#aeb3ae"/><stop offset="0.6" stop-color="#a8a278"/><stop offset="1" stop-color="#958e50"/></linearGradient></defs><rect width="70" height="53" fill="#121212"/><rect x="0" y="6" width="70" height="39" fill="url(#g8)"/></g></svg></svg>
<div class="t c " style="left:264.4px;width:120px;top:276.7px;color:#1a1a1a;letter-spacing:-0.15px">Astérix Chez Les</div>
<div class="t c " style="left:264.4px;width:120px;top:290.8px;color:#1a1a1a;letter-spacing:-0.15px">Bretons (1986)</div>
<div class="t c " style="left:264.4px;width:120px;top:304.9px;color:#1a1a1a;letter-spacing:-0.15px">(Film HD).mp4</div>
<div class="t c " style="left:368.1px;width:120px;top:276.7px;color:#1a1a1a;letter-spacing:-0.15px">Bagdad</div>
<div class="t c " style="left:368.1px;width:120px;top:290.8px;color:#1a1a1a;letter-spacing:-0.15px">Café.mp4</div>
<div class="t c " style="left:471.8px;width:120px;top:276.7px;color:#1a1a1a;letter-spacing:-0.15px">Le Retour de Don</div>
<div class="t c " style="left:471.8px;width:120px;top:290.8px;color:#1a1a1a;letter-spacing:-0.15px">Camillo 1953</div>
<div class="t c " style="left:471.8px;width:120px;top:304.9px;color:#1a1a1a;letter-spacing:-0.15px">Comédie</div>
<div class="t c " style="left:575.5px;width:120px;top:276.7px;color:#1a1a1a;letter-spacing:-0.15px">LeJourLePlusLon</div>
<div class="t c " style="left:575.5px;width:120px;top:290.8px;color:#1a1a1a;letter-spacing:-0.15px">g.mp4</div>
<div class="t c " style="left:679.2px;width:120px;top:276.7px;color:#1a1a1a;letter-spacing:-0.15px">Les Bronzés font</div>
<div class="t c " style="left:679.2px;width:120px;top:290.8px;color:#1a1a1a;letter-spacing:-0.15px">du ski - Film</div>
<div class="t c " style="left:679.2px;width:120px;top:304.9px;color:#1a1a1a;letter-spacing:-0.15px">Complet</div>
<div class="t c " style="left:679.2px;width:120px;top:319.0px;color:#1a1a1a;letter-spacing:-0.15px">[HD].mp4</div>
<div class="t c " style="left:783.3px;width:120px;top:276.7px;color:#1a1a1a;letter-spacing:-0.15px">Les Bronzes.mp4</div>
<div class="t c " style="left:887.0px;width:120px;top:276.7px;color:#1a1a1a;letter-spacing:-0.15px">Les Tontons</div>
<div class="t c " style="left:887.0px;width:120px;top:290.8px;color:#1a1a1a;letter-spacing:-0.15px">Flingueurs Film</div>
<div class="t c " style="left:887.0px;width:120px;top:304.9px;color:#1a1a1a;letter-spacing:-0.15px">Complet En</div>
<div class="t c " style="left:887.0px;width:120px;top:319.0px;color:#1a1a1a;letter-spacing:-0.15px">Entier Francais ...</div>
<div class="t c " style="left:264.4px;width:120px;top:431.2px;color:#1a1a1a;letter-spacing:-0.15px">Lucky Luke Daisy</div>
<div class="t c " style="left:264.4px;width:120px;top:445.3px;color:#1a1a1a;letter-spacing:-0.15px">Town (1971</div>
<div class="t c " style="left:264.4px;width:120px;top:459.4px;color:#1a1a1a;letter-spacing:-0.15px">réédition 2008)</div>
<div class="t c " style="left:264.4px;width:120px;top:473.5px;color:#1a1a1a;letter-spacing:-0.15px">Français Comp...</div>
<div class="a" style="left:369px;top:317px;width:325px;height:393px;background:#eeeeee;border:1px solid #a0a0a0;box-shadow:2px 2px 1px rgba(0,0,0,0.32)"></div>
<div class="a" style="left:370px;top:318px;width:323px;height:391px;border:1px solid #fbfbfb"></div>
<div class="a" style="left:371px;top:342.5px;width:322px;height:21px;background:#fcfcfc"></div>
<div class="t " style="left:402px;top:324.7px;font-weight:bold;color:#000">Ouvrir</div>
<div class="t " style="left:402px;top:345.7px;">Lire sur l’appareil</div>
<svg class="a" style="left:676px;top:347.0px" width="7" height="12" viewBox="0 0 7 12"><path d="M0.8 0.8L5.8 6L0.8 11.2" stroke="#333" stroke-width="1.1" fill="none"/></svg>
<div class="t " style="left:402px;top:366.7px;">Déplacer vers OneDrive</div>
<svg class="a" style="left:379px;top:368px" width="16" height="11" viewBox="0 0 16 11"><path d="M3.5 10.5H13A2.7 2.7 0 0 0 13.4 5.2A4.3 4.3 0 0 0 5.5 3.6A3.4 3.4 0 0 0 3.5 10.5Z" fill="#0a78d4"/></svg>
<div class="t " style="left:402px;top:387.7px;">7-Zip</div>
<svg class="a" style="left:676px;top:389.0px" width="7" height="12" viewBox="0 0 7 12"><path d="M0.8 0.8L5.8 6L0.8 11.2" stroke="#333" stroke-width="1.1" fill="none"/></svg>
<div class="t " style="left:402px;top:408.7px;">CRC SHA</div>
<svg class="a" style="left:676px;top:410.0px" width="7" height="12" viewBox="0 0 7 12"><path d="M0.8 0.8L5.8 6L0.8 11.2" stroke="#333" stroke-width="1.1" fill="none"/></svg>
<div class="t " style="left:402px;top:429.7px;">GeoSetter</div>
<svg class="a" style="left:676px;top:431.0px" width="7" height="12" viewBox="0 0 7 12"><path d="M0.8 0.8L5.8 6L0.8 11.2" stroke="#333" stroke-width="1.1" fill="none"/></svg>
<svg class="a" style="left:380px;top:430px" width="14" height="14" viewBox="0 0 14 14"><rect x="0.5" y="0.5" width="13" height="13" fill="#e9e3a8" stroke="#8a8a6a"/><path d="M2 10L6 6L12 12" stroke="#6ba66b" fill="none"/><path d="M7 11L4.2 6A3 3 0 1 1 9.8 6Z" fill="#1f35b8"/><path d="M9 10L12 8" stroke="#222" stroke-width="1.2"/></svg>
<div class="t " style="left:402px;top:450.7px;">Partager</div>
<svg class="a" style="left:378px;top:451px" width="16" height="14" viewBox="0 0 16 14"><path d="M1 5V13H13V10" stroke="#333" stroke-width="1.1" fill="none"/><path d="M4 10Q5 4 11 4V1.5L15 5.5L11 9.5V7Q7 7 4 10Z" stroke="#333" stroke-width="1.1" fill="none"/></svg>
<div class="t " style="left:402px;top:471.7px;">Ouvrir avec</div>
<svg class="a" style="left:676px;top:473.0px" width="7" height="12" viewBox="0 0 7 12"><path d="M0.8 0.8L5.8 6L0.8 11.2" stroke="#333" stroke-width="1.1" fill="none"/></svg>
<div class="t " style="left:402px;top:492.7px;">Scanner les fichiers sélectionnés avec Avira</div>
<svg class="a" style="left:379px;top:492px" width="14" height="14" viewBox="0 0 14 14"><rect x="0" y="0" width="14" height="14" rx="2" fill="#c8102e"/><path d="M3 10.5C3.5 6 6.5 3.5 9 3.8C10.8 4.1 10.4 6.4 8.6 7.4M5 6C7.5 7.5 9 9.5 12 10.2" stroke="#fff" stroke-width="1.5" fill="none" stroke-linecap="round"/></svg>
<div class="t " style="left:402px;top:513.7px;">Restaurer les versions précédentes</div>
<div class="a" style="left:379px;top:534px;width:304px;height:1px;background:#a0a0a0"></div>
<div class="a" style="left:379px;top:535px;width:304px;height:1px;background:#fdfdfd"></div>
<div class="t " style="left:402px;top:540.7px;">Envoyer vers</div>
<svg class="a" style="left:676px;top:543.0px" width="7" height="12" viewBox="0 0 7 12"><path d="M0.8 0.8L5.8 6L0.8 11.2" stroke="#333" stroke-width="1.1" fill="none"/></svg>
<div class="a" style="left:379px;top:562px;width:304px;height:1px;background:#a0a0a0"></div>
<div class="a" style="left:379px;top:563px;width:304px;height:1px;background:#fdfdfd"></div>
<div class="t " style="left:402px;top:568.7px;">Couper</div>
<div class="t " style="left:402px;top:589.7px;">Copier</div>
<div class="a" style="left:379px;top:610px;width:304px;height:1px;background:#a0a0a0"></div>
<div class="a" style="left:379px;top:611px;width:304px;height:1px;background:#fdfdfd"></div>
<div class="t " style="left:402px;top:616.7px;">Créer un raccourci</div>
<div class="t " style="left:402px;top:637.7px;">Supprimer</div>
<div class="t " style="left:402px;top:658.7px;">Renommer</div>
<div class="a" style="left:379px;top:680px;width:304px;height:1px;background:#a0a0a0"></div>
<div class="a" style="left:379px;top:681px;width:304px;height:1px;background:#fdfdfd"></div>
<div class="t " style="left:402px;top:686.7px;">Propriétés</div>
<div class="a" style="left:688px;top:340px;width:243px;height:51px;background:#eeeeee;border:1px solid #a0a0a0;box-shadow:2px 2px 1px rgba(0,0,0,0.32)"></div>
<div class="a" style="left:689px;top:341px;width:241px;height:49px;border:1px solid #fbfbfb"></div>
<svg class="a" style="left:700px;top:347px" width="15" height="16" viewBox="0 0 15 16"><path d="M2 4H6V14H2Z" fill="#fff" stroke="#777"/><path d="M0 15H8" stroke="#333" stroke-width="1.2"/><rect x="6" y="9" width="2" height="5" fill="#b7a0d0"/><circle cx="10" cy="5" r="4.8" fill="#2fb52f"/><path d="M8.5 2.5L12.5 5L8.5 7.5Z" fill="#fff"/></svg>
<div class="t " style="left:721.5px;top:348.2px;">décodeur TV d’Orange</div>
<svg class="a" style="left:698px;top:370px" width="17" height="12" viewBox="0 0 17 12"><rect x="0.5" y="0.5" width="16" height="9" fill="#e88a8f" stroke="#8f3a40"/><rect x="4" y="3" width="9" height="4" fill="#d0555d"/><path d="M5 11.5H12" stroke="#222" stroke-width="1.5"/></svg>
<div class="t " style="left:721.5px;top:369.7px;letter-spacing:-0.2px">[LG] webOS TV SM8200PLA</div>
</body></html>
